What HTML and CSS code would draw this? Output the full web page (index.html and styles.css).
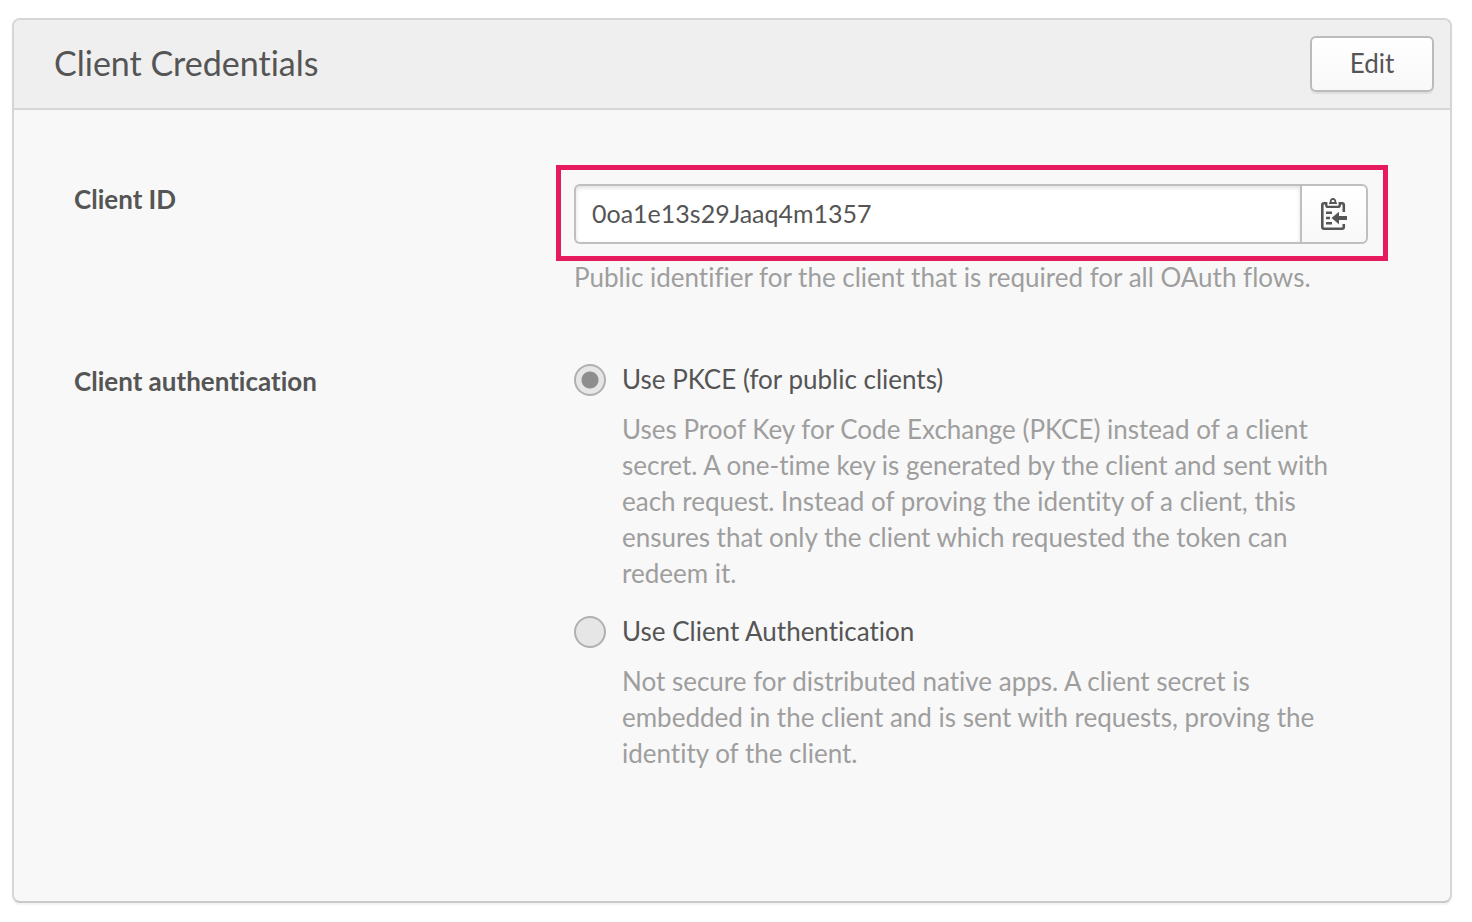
FILE: index.html
```html
<!DOCTYPE html>
<html lang="en">
<head>
<meta charset="utf-8">
<title>Client Credentials</title>
<link rel="stylesheet" href="styles.css">
</head>
<body>
<main class="card">
  <header class="card-header">
    <h1 class="card-title">Client Credentials</h1>
    <button class="edit-button" type="button">Edit</button>
  </header>
  <div class="card-body">
    <div class="row">
      <label class="row-label" for="client-id">Client ID</label>
      <div class="row-content">
        <div class="copy-field">
          <input class="copy-input" id="client-id" type="text" value="0oa1e13s29Jaaq4m1357" readonly>
          <button class="copy-button" type="button" aria-label="Copy to clipboard">
            <svg class="copy-icon" viewBox="0 0 26 32" width="26" height="32" aria-hidden="true">
              <path d="M4 5.2H3Q1.3 5.2 1.3 7V29Q1.3 30.7 3 30.7H21Q22.8 30.7 22.8 29V26M22.8 14V7Q22.8 5.2 21 5.2H20" fill="none" stroke="#555" stroke-width="2.6"/>
              <path d="M5.2 4V7Q5.2 8.9 7 8.9H17Q18.8 8.9 18.8 7V4" fill="none" stroke="#555" stroke-width="2.4"/>
              <path d="M8 6V4.500H8.700Q8.700 0 12 0Q15.300 0 15.300 4.500H16V6ZM10.600 4H13.400V3Q13.400 2 12 2Q10.600 2 10.600 3Z" fill="#555" fill-rule="evenodd"/>
              <path d="M5 13.500H11V15.900H5ZM5 18.800H9V21.200H5ZM5 24H11V26.400H5Z" fill="#555"/>
              <path d="M10.500 20L18 13.700V18H26V22H18V26.300Z" fill="#555"/>
            </svg>
          </button>
        </div>
        <p class="help">Public identifier for the client that is required for all OAuth flows.</p>
      </div>
    </div>
    <div class="row" role="radiogroup" aria-labelledby="auth-label">
      <div class="row-label" id="auth-label">Client authentication</div>
      <div class="row-content options">
        <div class="option">
          <input class="radio" type="radio" name="auth" id="auth-pkce" aria-describedby="pkce-help" checked>
          <div class="option-text">
            <label class="option-label" for="auth-pkce">Use PKCE (for public clients)</label>
            <p class="description" id="pkce-help">Uses Proof Key for Code Exchange (PKCE) instead of a client<br>secret. A one-time key is generated by the client and sent with<br>each request. Instead of proving the identity of a client, this<br>ensures that only the client which requested the token can<br>redeem it.</p>
          </div>
        </div>
        <div class="option">
          <input class="radio" type="radio" name="auth" id="auth-client" aria-describedby="client-help">
          <div class="option-text">
            <label class="option-label" for="auth-client">Use Client Authentication</label>
            <p class="description" id="client-help">Not secure for distributed native apps. A client secret is<br>embedded in the client and is sent with requests, proving the<br>identity of the client.</p>
          </div>
        </div>
      </div>
    </div>
  </div>
</main>
</body>
</html>
```

FILE: styles.css
```css
* {
  box-sizing: border-box;
}

body {
  margin: 0;
  padding: 18px 20px 18px 12px;
  background: #fff;
  color: #555;
  font-family: Lato, "Open Sans", sans-serif;
  font-size: 26px;
  font-variant-ligatures: none;
  line-height: 36px;
}

.card {
  border: 2px solid #d6d6d6;
  border-bottom-color: #cacaca;
  border-radius: 8px;
  background: #f8f8f8;
  box-shadow: 0 2px 2px rgba(0, 0, 0, 0.05);
  overflow: hidden;
}

.card-header {
  display: flex;
  align-items: center;
  justify-content: space-between;
  padding: 16px 16px 16px 40px;
  border-bottom: 2px solid #d6d6d6;
  background: #efefef;
}

.card-title {
  margin: 0;
  padding-bottom: 2px;
  font-size: 34px;
  font-weight: 400;
  line-height: 40px;
}

.edit-button {
  width: 124px;
  height: 56px;
  padding: 0 0 2px;
  border: 2px solid #bbb;
  border-radius: 6px;
  background: linear-gradient(#fff, #f8f8f8);
  box-shadow: 0 2px 1px rgba(0, 0, 0, 0.07);
  color: inherit;
  font: inherit;
}

.card-body {
  display: flex;
  flex-direction: column;
  gap: 66px;
  padding: 74px 82px 130px 60px;
}

.row {
  display: flex;
  align-items: flex-start;
}

.row-label {
  flex: 0 0 500px;
  font-weight: 700;
}

#auth-label {
  padding-top: 2px;
}

.row-label[for] {
  margin-top: -3px;
}

.row-content {
  flex: 1;
  min-width: 0;
}

.copy-field {
  position: relative;
  display: flex;
  height: 60px;
}

.copy-field::after {
  content: "";
  position: absolute;
  inset: -19px -20px -17px -18px;
  border: 5px solid #e51b5d;
  pointer-events: none;
}

.copy-input {
  flex: 1;
  min-width: 0;
  padding: 0 16px 2px;
  border: 2px solid #bfbfbf;
  border-right: 0;
  border-radius: 6px 0 0 6px;
  background: #fff;
  box-shadow: inset 0 2px 4px rgba(0, 0, 0, 0.12);
  color: inherit;
  font: inherit;
  font-size: 25px;
}

.copy-button {
  display: flex;
  align-items: center;
  justify-content: center;
  width: 68px;
  padding: 0;
  border: 2px solid #bfbfbf;
  border-radius: 0 6px 6px 0;
  background: linear-gradient(#fff, #f8f8f8);
}

.help,
.description {
  margin: 0;
  color: #9e9e9e;
}

.help {
  margin-top: 15px;
}

.options {
  display: flex;
  flex-direction: column;
  gap: 22px;
}

.option {
  display: flex;
  gap: 16px;
}

.radio {
  flex: none;
  appearance: none;
  width: 32px;
  height: 32px;
  margin: 3px 0 0;
  border: 2px solid #b0b0b0;
  border-radius: 50%;
  background: #e6e6e6;
}

.radio:checked {
  background: radial-gradient(circle, #8e8e8e 8px, #e6e6e6 9px);
}

.option-text {
  flex: 1;
  min-width: 0;
}

.option-label {
  display: block;
}

.description {
  margin-top: 14px;
  white-space: nowrap;
}
```
